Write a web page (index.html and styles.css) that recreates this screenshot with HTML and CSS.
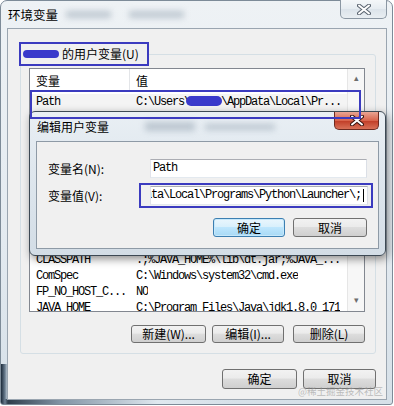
FILE: index.html
```html
<!DOCTYPE html>
<html lang="zh-CN">
<head>
  <meta charset="UTF-8">
  <title>环境变量</title>
  <link rel="stylesheet" href="styles.css">
</head>
<body>

  <div class="window">
    <!-- title bar -->
    <div class="titlebar">
      <span class="title">环境变量</span>
      <span class="glass-blur b1"></span>
      <span class="glass-blur b2"></span>
      <div class="caption-close">
        <svg width="14" height="11" viewBox="0 0 14 11">
          <path d="M2 1.5 L12 9.5 M12 1.5 L2 9.5" stroke="#5a6470" stroke-width="4" stroke-linecap="round"/>
          <path d="M2 1.5 L12 9.5 M12 1.5 L2 9.5" stroke="#fff" stroke-width="2" stroke-linecap="round"/>
        </svg>
      </div>
    </div>

    <div class="client">
      <fieldset class="group">
        <legend class="group-legend"><span class="name-blob"></span>的用户变量(U)</legend>

        <div class="list">
          <div class="list-main">
            <div class="list-head">
              <div class="col-name">变量</div>
              <div class="col-value">值</div>
            </div>
            <div class="row row-selected">
              <div class="col-name">Path</div>
              <div class="col-value">C:\Users\<span class="name-blob small"></span>\AppData\Local\Pr...</div>
            </div>
            <div class="rows-bottom">
              <div class="row"><div class="col-name">CLASSPATH</div><div class="col-value">.;%JAVA_HOME%\lib\dt.jar;%JAVA_...</div></div>
              <div class="row"><div class="col-name">ComSpec</div><div class="col-value">C:\Windows\system32\cmd.exe</div></div>
              <div class="row"><div class="col-name">FP_NO_HOST_C...</div><div class="col-value">NO</div></div>
              <div class="row"><div class="col-name">JAVA_HOME</div><div class="col-value">C:\Program Files\Java\jdk1.8.0_171</div></div>
            </div>
          </div>
          <div class="scrollbar">
            <span class="arrow">&#9652;</span>
            <span class="arrow">&#9662;</span>
          </div>
        </div>

        <div class="button-row">
          <button class="btn w75">新建(W)...</button>
          <button class="btn w72">编辑(I)...</button>
          <button class="btn w72 ml8">删除(L)</button>
        </div>
      </fieldset>

      <div class="button-row footer">
        <button class="btn tall w75">确定</button>
        <button class="btn tall w73">取消</button>
      </div>
    </div>

    <!-- edit dialog on top -->
    <div class="edit-dialog">
      <div class="dlg-titlebar">
        <span class="title">编辑用户变量</span>
        <span class="glass-blur b3"></span>
        <span class="glass-blur b4"></span>
        <div class="dlg-close">
          <svg width="14" height="11" viewBox="0 0 14 11">
            <path d="M2 1.5 L12 9.5 M12 1.5 L2 9.5" stroke="#3b1510" stroke-width="4" stroke-linecap="round"/>
            <path d="M2 1.5 L12 9.5 M12 1.5 L2 9.5" stroke="#fff" stroke-width="2" stroke-linecap="round"/>
          </svg>
        </div>
      </div>
      <div class="dlg-client">
        <div class="field">
          <label class="field-label">变量名(N):</label>
          <div class="textbox">Path</div>
        </div>
        <div class="field">
          <label class="field-label short">变量值(V):</label>
          <div class="mark-box">
            <div class="textbox scrolled"><span>%USERPROFILE%\AppData\Local\Programs\Python\Launcher\;</span><span class="caret"></span></div>
          </div>
        </div>
        <div class="button-row dlg-buttons">
          <button class="btn default w72">确定</button>
          <button class="btn w74">取消</button>
        </div>
      </div>
    </div>

    <div class="path-mark"></div>
    <div class="watermark">@稀土掘金技术社区</div>
  </div>

</body>
</html>
```

FILE: styles.css
```css
body {
  margin: 0;
  background: #fff;
  font-family: "Noto Sans CJK SC", "Liberation Sans", sans-serif;
  font-size: 12px;
  color: #000;
}

.window {
  position: relative;
  box-sizing: border-box;
  width: 393px;
  height: 405px;
  border: 1px solid #7d8b98;
  border-radius: 7px 7px 3px 3px;
  padding: 0 5px 4px 6px;
  display: flex;
  flex-direction: column;
  background:
    linear-gradient(to right, #1c2a3a 0px, #6a7d8f 4px, transparent 7px) left bottom / 100% 40px no-repeat,
    linear-gradient(to right, #23313f 0%, #8093a4 15%, #dfe8ef 40%, transparent 60%) left bottom / 100% 5px no-repeat,
    linear-gradient(#eef2f5, #e3eaf0 60%, #d6e0e8);
}

.titlebar {
  position: relative;
  height: 27px;
  display: flex;
  align-items: center;
}

.title {
  font-size: 12.5px;
  padding-left: 1px;
  color: #000;
  position: relative;
  z-index: 1;
}

.glass-blur {
  display: inline-block;
  height: 7px;
  background: #aab6c2;
  filter: blur(3px);
  opacity: 0.7;
}
.b1 { width: 45px; margin-left: 8px; }
.b2 { width: 55px; margin-left: 18px; }

.caption-close {
  position: absolute;
  top: -1px;
  right: 0;
  box-sizing: border-box;
  width: 47px;
  height: 19px;
  border: 1px solid #8b97a3;
  border-top: none;
  border-radius: 0 0 5px 5px;
  background: linear-gradient(#f4f7f9, #e6ecf1 50%, #dbe3ea 50%, #e9eef2);
  display: flex;
  align-items: center;
  justify-content: center;
}

.client {
  flex: 1;
  border: 1px solid #9aa5b0;
  background: #f0f0f0;
  display: flex;
  flex-direction: column;
}

.group {
  margin: 13px 10px 0 12px;
  padding: 2px 10px 10px 8px;
  border: 1px solid #d5dfe5;
  border-radius: 3px;
  min-width: 0;
}

.group-legend {
  margin-left: -10px;
  padding: 0 8px 0 2px;
  height: 20px;
  line-height: 20px;
  border: 2px solid #3b3bbf;
  display: flex;
  align-items: center;
}

.name-blob {
  display: inline-block;
  width: 36px;
  height: 8px;
  border-radius: 4px;
  background: #3a3acb;
  margin-right: 3px;
}
.name-blob.small {
  width: 36px;
  height: 10px;
  border-radius: 5px;
  margin: 0 -1px 0 -4px;
  vertical-align: -1px;
}

.list {
  height: 242px;
  border: 1px solid #828790;
  background: #fff;
  display: flex;
  overflow: hidden;
}

.list-main {
  flex: 1;
  display: flex;
  flex-direction: column;
  overflow: hidden;
}

.list-head {
  display: flex;
  height: 23px;
  line-height: 24px;
  flex-shrink: 0;
}
.list-head .col-name {
  border-right: 1px solid #e3e5e8;
}

.col-name {
  box-sizing: border-box;
  width: 100px;
  padding-left: 6px;
  flex-shrink: 0;
  white-space: nowrap;
}

.col-value {
  padding-left: 6px;
  white-space: nowrap;
  overflow: hidden;
}

.row {
  display: flex;
  height: 16px;
  line-height: 16px;
  font-family: "Liberation Mono", monospace;
  font-size: 12px;
  letter-spacing: -1.2px;
  flex-shrink: 0;
}

.row-selected {
  margin-top: 2px;
  height: 17px;
  line-height: 17px;
  background: #f4f4f4;
}

.rows-bottom {
  margin-top: auto;
  margin-bottom: -5px;
}

.scrollbar {
  width: 17px;
  flex-shrink: 0;
  border-left: 1px solid #e6e6e6;
  background: #f7f7f7;
  display: flex;
  flex-direction: column;
  justify-content: space-between;
  align-items: center;
  color: #6d6d6d;
  font-size: 9px;
  line-height: 14px;
  padding: 2px 0 4px;
  box-sizing: border-box;
}

.button-row {
  display: flex;
  justify-content: flex-end;
  gap: 6px;
  margin-top: 13px;
}

.btn {
  box-sizing: border-box;
  height: 18px;
  padding: 0;
  border: 1px solid #707070;
  border-radius: 3px;
  background: linear-gradient(#f2f2f2, #ebebeb 45%, #dddddd 50%, #cfcfcf);
  font-family: "Noto Sans CJK SC", "Liberation Sans", sans-serif;
  font-size: 12px;
  line-height: 14px;
  color: #000;
}
.btn.tall { height: 20px; }
.btn.default {
  border-color: #3c7fb1;
  background: linear-gradient(#eaf6fd, #d9f0fc 45%, #bee6fd 50%, #a7d9f5);
  box-shadow: inset 0 0 0 1px #c6e8fb;
}

.w72 { width: 72px; }
.w73 { width: 73px; }
.w74 { width: 74px; }
.w75 { width: 75px; }
.ml8 { margin-left: 3px; }

.footer {
  margin: 15px 10px 0 0;
}

/* edit dialog */
.edit-dialog {
  position: absolute;
  left: 28px;
  top: 110px;
  z-index: 2;
  box-sizing: border-box;
  width: 357px;
  height: 145px;
  border: 1px solid #3d4954;
  border-radius: 6px;
  padding: 0 6px 6px 6px;
  display: flex;
  flex-direction: column;
  background: linear-gradient(#e9eff4, #dfe7ee 40%, #d3dde6);
  box-shadow: 2px 3px 8px rgba(0, 0, 0, 0.45);
}

.dlg-titlebar {
  position: relative;
  height: 29px;
  display: flex;
  align-items: center;
}
.dlg-titlebar .title {
  font-size: 12px;
  padding-left: 1px;
}
.b3 { width: 50px; margin-left: 36px; height: 9px; }
.b4 { width: 70px; margin-left: 10px; height: 6px; }

.dlg-close {
  position: absolute;
  top: 0;
  right: 0;
  box-sizing: border-box;
  width: 45px;
  height: 18px;
  border: 1px solid #6d2a20;
  border-top: none;
  border-radius: 0 0 5px 5px;
  background: linear-gradient(#e9a593, #d8644c 50%, #c2402a 55%, #d87158);
  display: flex;
  align-items: center;
  justify-content: center;
}

.dlg-client {
  flex: 1;
  border: 1px solid #8e9aa6;
  background: #f0f0f0;
  padding: 17px 11px 0 11px;
  display: flex;
  flex-direction: column;
}

.field {
  display: flex;
  align-items: center;
}
.field + .field {
  margin-top: 5px;
}

.field-label {
  width: 102px;
  flex-shrink: 0;
}
.field-label.short {
  width: 91px;
}

.textbox {
  box-sizing: border-box;
  width: 218px;
  height: 19px;
  border: 1px solid #abadb3;
  border-color: #abadb3 #dbdfe6 #e3e9ef #e2e3ea;
  background: #fff;
  padding-left: 2px;
  font-family: "Liberation Mono", monospace;
  font-size: 12px;
  letter-spacing: -1.2px;
  line-height: 17px;
  white-space: nowrap;
}

.mark-box {
  padding: 1px 3px 1px 9px;
  border: 2px solid #3b3bbf;
}

.textbox.scrolled {
  display: flex;
  justify-content: flex-end;
  overflow: hidden;
  padding: 0 3px 0 0;
}
.textbox.scrolled span {
  flex-shrink: 0;
}
.caret {
  width: 1px;
  height: 13px;
  margin: 2px 0 0 2px;
  background: #000;
}

.dlg-buttons {
  margin-top: 10px;
  gap: 8px;
}
.dlg-buttons .btn {
  height: 19px;
}

/* annotation over the Path row */
.path-mark {
  position: absolute;
  left: 29px;
  top: 89px;
  width: 327px;
  height: 25px;
  border: 2px solid #3b3bbf;
  z-index: 3;
}

.watermark {
  position: absolute;
  right: 9px;
  bottom: 6px;
  z-index: 4;
  font-size: 9.5px;
  color: rgba(150, 150, 150, 0.6);
}
```
